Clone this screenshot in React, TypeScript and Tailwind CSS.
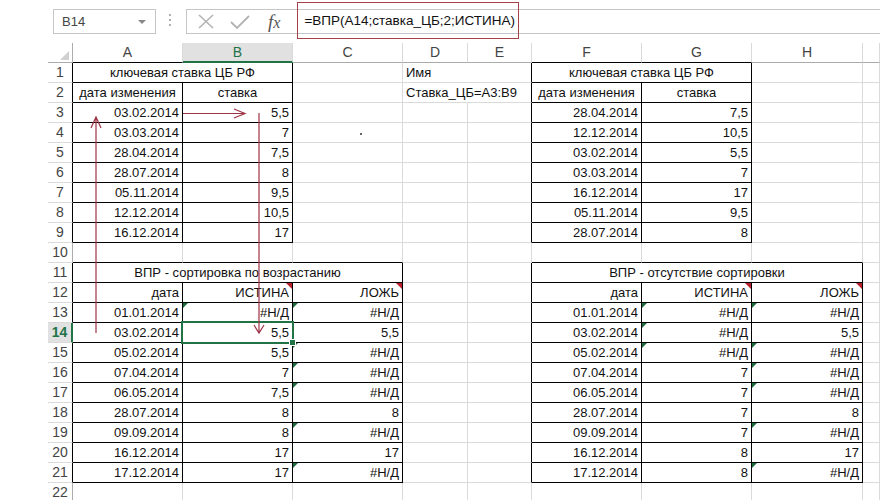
import React from "react";

type Cell = {
  t?: string;
  a?: "l" | "c" | "r";
  span?: number;
  red?: boolean;
  spill?: boolean;
  dot?: boolean;
};

const cols = [
  { k: "A", w: "w-[110px]" },
  { k: "B", w: "w-[110px]" },
  { k: "C", w: "w-[110px]" },
  { k: "D", w: "w-[65px]" },
  { k: "E", w: "w-[64px]" },
  { k: "F", w: "w-[110px]" },
  { k: "G", w: "w-[110px]" },
  { k: "H", w: "w-[111px]" },
  { k: "", w: "w-[17px]" },
];

const spanW: Record<string, string> = {
  "1-2": "w-[220px]",
  "6-2": "w-[220px]",
  "1-3": "w-[330px]",
  "6-3": "w-[331px]",
};

const inTable = (r: number, c: number) =>
  (r >= 1 && r <= 9 && (c === 1 || c === 2)) ||
  (r >= 1 && r <= 9 && (c === 6 || c === 7)) ||
  (r >= 11 && r <= 21 && c >= 1 && c <= 3) ||
  (r >= 11 && r <= 21 && c >= 6 && c <= 8);

const top1 = [
  ["03.02.2014", "5,5"],
  ["03.03.2014", "7"],
  ["28.04.2014", "7,5"],
  ["28.07.2014", "8"],
  ["05.11.2014", "9,5"],
  ["12.12.2014", "10,5"],
  ["16.12.2014", "17"],
];
const top2 = [
  ["28.04.2014", "7,5"],
  ["12.12.2014", "10,5"],
  ["03.02.2014", "5,5"],
  ["03.03.2014", "7"],
  ["16.12.2014", "17"],
  ["05.11.2014", "9,5"],
  ["28.07.2014", "8"],
];
const dates = [
  "01.01.2014",
  "03.02.2014",
  "05.02.2014",
  "07.04.2014",
  "06.05.2014",
  "28.07.2014",
  "09.09.2014",
  "16.12.2014",
  "17.12.2014",
];
const sorted = [
  ["#Н/Д", "#Н/Д"],
  ["5,5", "5,5"],
  ["5,5", "#Н/Д"],
  ["7", "#Н/Д"],
  ["7,5", "#Н/Д"],
  ["8", "8"],
  ["8", "#Н/Д"],
  ["17", "17"],
  ["17", "#Н/Д"],
];
const unsorted = [
  ["#Н/Д", "#Н/Д"],
  ["#Н/Д", "5,5"],
  ["#Н/Д", "#Н/Д"],
  ["7", "#Н/Д"],
  ["7", "#Н/Д"],
  ["7", "8"],
  ["7", "#Н/Д"],
  ["8", "17"],
  ["8", "#Н/Д"],
];

function buildSheet() {
  const s: Record<string, Cell> = {};
  const put = (r: number, c: number, cell: Cell) => (s[`${r}-${c}`] = cell);

  put(1, 1, { t: "ключевая ставка ЦБ РФ", a: "c", span: 2 });
  put(1, 6, { t: "ключевая ставка ЦБ РФ", a: "c", span: 2 });
  put(1, 4, { t: "Имя", a: "l", spill: true });
  put(2, 4, { t: "Ставка_ЦБ=A3:B9", a: "l", spill: true });
  put(2, 1, { t: "дата изменения", a: "c" });
  put(2, 2, { t: "ставка", a: "c" });
  put(2, 6, { t: "дата изменения", a: "c" });
  put(2, 7, { t: "ставка", a: "c" });
  put(4, 3, { dot: true, a: "l" });
  top1.forEach(([d, v], i) => {
    put(3 + i, 1, { t: d, a: "r" });
    put(3 + i, 2, { t: v, a: "r" });
  });
  top2.forEach(([d, v], i) => {
    put(3 + i, 6, { t: d, a: "r" });
    put(3 + i, 7, { t: v, a: "r" });
  });

  put(11, 1, { t: "ВПР - сортировка по возрастанию", a: "c", span: 3 });
  put(11, 6, { t: "ВПР - отсутствие сортировки", a: "c", span: 3 });
  [1, 6].forEach((c) => {
    put(12, c, { t: "дата", a: "r" });
    put(12, c + 1, { t: "ИСТИНА", a: "r", red: true });
    put(12, c + 2, { t: "ЛОЖЬ", a: "r", red: true });
  });
  dates.forEach((d, i) => {
    put(13 + i, 1, { t: d, a: "r" });
    put(13 + i, 2, { t: sorted[i][0], a: "r" });
    put(13 + i, 3, { t: sorted[i][1], a: "r" });
    put(13 + i, 6, { t: d, a: "r" });
    put(13 + i, 7, { t: unsorted[i][0], a: "r" });
    put(13 + i, 8, { t: unsorted[i][1], a: "r" });
  });
  return s;
}

const sheet = buildSheet();

function SheetRow({ r }: { r: number }) {
  const cells: React.ReactNode[] = [];
  let c = 1;
  while (c <= cols.length) {
    const cell = sheet[`${r}-${c}`] || {};
    const span = cell.span || 1;
    const w = span > 1 ? spanW[`${c}-${span}`] : cols[c - 1].w;
    const rightBlack = inTable(r, c) || inTable(r, c + span);
    const bottomBlack = inTable(r, c) || inTable(r + 1, c);
    const rb = cell.spill
      ? "border-r-transparent"
      : rightBlack
        ? "border-r-black"
        : "border-r-[#dadada]";
    const bb = bottomBlack ? "border-b-black" : "border-b-[#dadada]";
    const align =
      cell.a === "c" ? "text-center" : cell.a === "l" ? "text-left" : "text-right";
    const isActive = r === 14 && c === 2;
    cells.push(
      <div
        key={c}
        className={`relative h-[20px] shrink-0 whitespace-nowrap border-r border-b px-[3px] text-[13px] leading-[19px] text-[#111] ${w} ${rb} ${bb} ${align}`}
      >
        {cell.t === "#Н/Д" && (
          <span className="absolute left-0 top-0 h-0 w-0 border-t-[5px] border-r-[5px] border-t-[#1d6b3f] border-r-transparent" />
        )}
        {cell.red && (
          <span className="absolute right-0 top-0 h-0 w-0 border-t-[6px] border-l-[6px] border-t-[#b8202a] border-l-transparent" />
        )}
        {cell.dot && (
          <span className="ml-[64px] inline-block h-[2px] w-[2px] bg-[#666] align-middle" />
        )}
        {cell.t}
        {isActive && (
          <>
            <span className="absolute -left-[2px] -top-[2px] z-10 h-[23px] w-[113px] border-2 border-[#217346]" />
            <span className="absolute left-[106px] top-[16px] z-20 h-[7px] w-[7px] border border-white bg-[#217346]" />
          </>
        )}
      </div>
    );
    c += span;
  }

  const selected = r === 14;
  const headRight = selected
    ? "border-r-2 border-r-[#217346]"
    : inTable(r, 1)
      ? "border-r border-r-black"
      : "border-r border-r-[#ababab]";

  return (
    <div className="flex h-[20px]">
      <div className="w-[48px] shrink-0" />
      <div
        className={`h-[20px] w-[25px] shrink-0 border-b border-b-[#dadada] text-center text-[14px] leading-[19px] ${headRight} ${
          selected ? "bg-[#e1e1e1] font-bold text-[#217346]" : "text-[#444]"
        }`}
      >
        {r}
      </div>
      {cells}
    </div>
  );
}

function HeaderRow() {
  return (
    <div className="flex h-[20px]">
      <div className="w-[48px] shrink-0" />
      <div className="relative h-[20px] w-[25px] shrink-0 border-r border-b border-r-[#ababab] border-b-[#ababab]">
        <span className="absolute bottom-[2px] right-[3px] h-0 w-0 border-b-[9px] border-l-[9px] border-b-[#d0d0d0] border-l-transparent" />
      </div>
      {cols.map((col, i) => {
        const c = i + 1;
        const sel = col.k === "B";
        const bottom = sel
          ? "border-b-2 border-b-[#217346]"
          : inTable(1, c)
            ? "border-b border-b-black"
            : "border-b border-b-[#ababab]";
        return (
          <div
            key={i}
            className={`h-[20px] shrink-0 border-r border-r-[#dadada] text-center text-[14px] leading-[19px] ${col.w} ${bottom} ${
              sel ? "bg-[#e1e1e1] text-[#217346]" : "text-[#444]"
            }`}
          >
            {col.k}
          </div>
        );
      })}
    </div>
  );
}

function Toolbar() {
  return (
    <div className="relative flex h-[43px] items-start">
      <div className="ml-[53px] mt-[9px] flex h-[25px] w-[103px] shrink-0 items-center justify-between border border-[#c6c6c6] pl-[8px] pr-[9px]">
        <span className="text-[13px] text-[#444]">B14</span>
        <span className="h-0 w-0 border-x-[4px] border-t-[4px] border-x-transparent border-t-[#888]" />
      </div>
      <div className="ml-[13px] mt-[14px] flex w-[2px] shrink-0 flex-col gap-[3px]">
        <span className="h-[2px] w-[2px] bg-[#b0b0b0]" />
        <span className="h-[2px] w-[2px] bg-[#b0b0b0]" />
        <span className="h-[2px] w-[2px] bg-[#b0b0b0]" />
      </div>
      <div className="ml-[15px] mt-[9px] flex h-[25px] flex-1 items-center border border-r-0 border-[#c6c6c6]">
        <svg className="ml-[11px]" width="16" height="15" viewBox="0 0 16 15">
          <path d="M1 1 L15 14 M15 1 L1 14" stroke="#b3b3b3" strokeWidth="1.6" fill="none" />
        </svg>
        <svg className="ml-[16px]" width="20" height="14" viewBox="0 0 20 14">
          <path d="M1 7 L7 13 L19 1" stroke="#b3b3b3" strokeWidth="1.8" fill="none" />
        </svg>
        <span className="ml-[18px] font-['Liberation_Serif',serif] text-[19px] italic leading-none text-[#555]">
          f<span className="text-[16px]">x</span>
        </span>
        <span className="ml-[24px] text-[13.5px] text-[#111]">=ВПР(A14;ставка_ЦБ;2;ИСТИНА)</span>
      </div>
      <div className="absolute left-[297px] top-[2px] h-[37px] w-[222px] border border-[#a8404a]" />
    </div>
  );
}

export default function App() {
  const rows = Array.from({ length: 22 }, (_, i) => i + 1);
  return (
    <div className="relative h-[500px] w-[880px] overflow-hidden bg-white font-['Liberation_Sans',Arial,sans-serif]">
      <Toolbar />
      <HeaderRow />
      {rows.map((r) => (
        <SheetRow key={r} r={r} />
      ))}
      <svg
        className="pointer-events-none absolute left-0 top-0 z-30"
        width="880"
        height="500"
        viewBox="0 0 880 500"
      >
        <g stroke="#9e3345" strokeWidth="1.2" fill="none">
          <path d="M96 333 L96 117 M91 128 L96 117 L101 128" />
          <path d="M183 113.5 L245 113.5 M234 109 L245 113.5 L234 118" />
          <path d="M259 113 L259 333 M254 325 L259 333 L264 325" />
        </g>
      </svg>
    </div>
  );
}
